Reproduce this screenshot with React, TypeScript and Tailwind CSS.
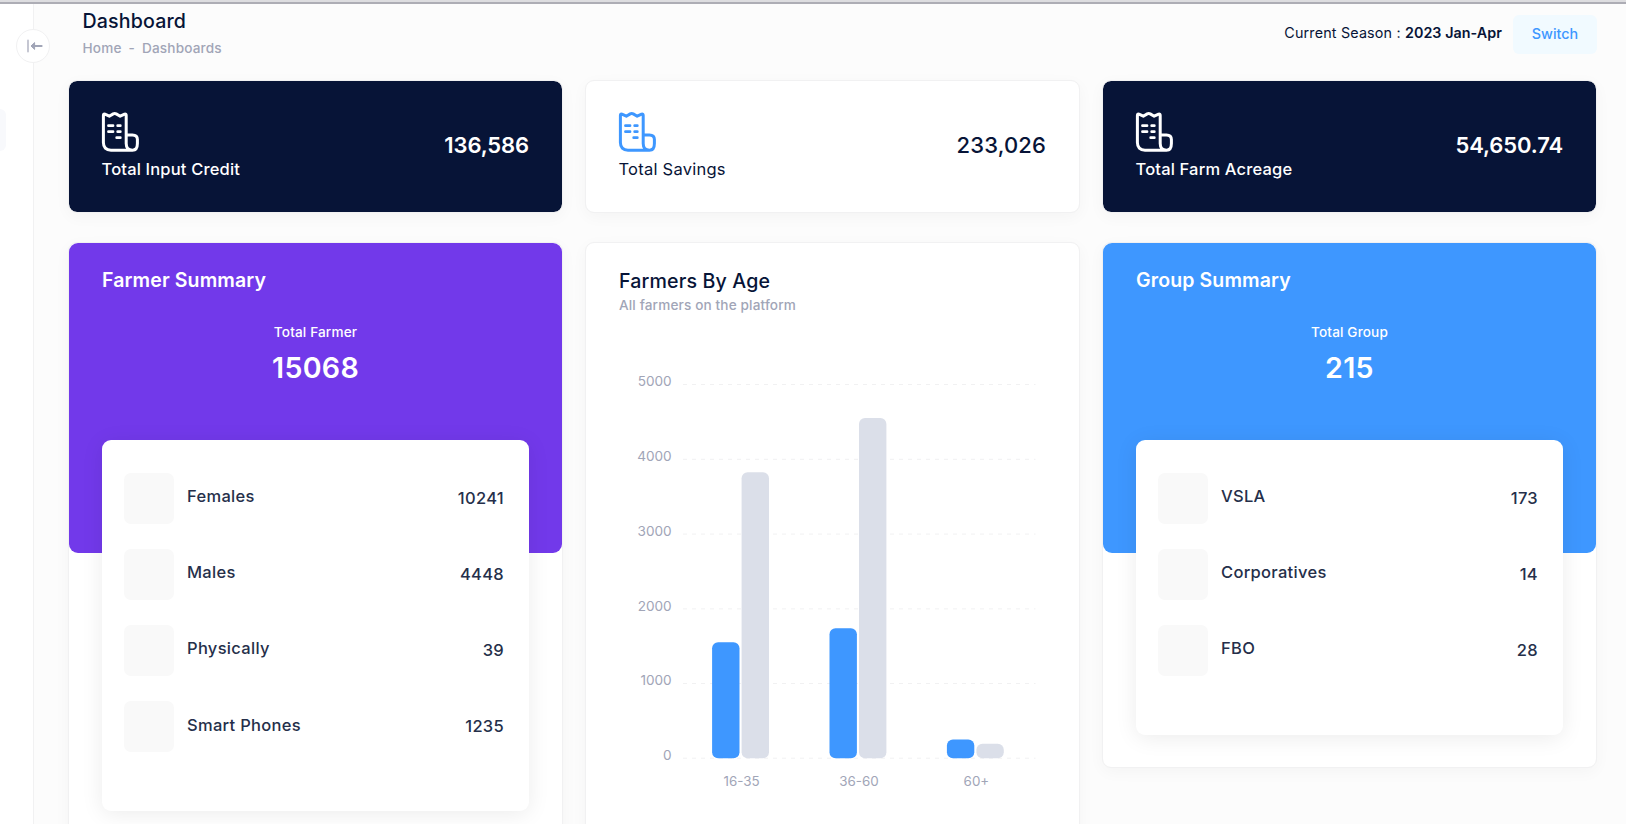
import React from "react";

const CARD =
  "rounded-[9px] border border-[#f1f1f2] bg-clip-padding shadow-[0_4px_16px_rgba(0,0,0,0.035)]";

function BillIcon({ className }: { className: string }) {
  return (
    <svg
      viewBox="0 0 40 42"
      className={className}
      fill="none"
      stroke="currentColor"
      strokeWidth="3"
      strokeLinecap="round"
      strokeLinejoin="round"
    >
      <path d="M31.5 39.2H10Q2.4 39.2 2.4 31.6V4.4Q2.4 2.7 3.9 3.2L8.3 5.2L12.2 2.9Q13.7 2.1 15.2 2.9L19.2 5.2L23.6 3.2Q25.2 2.7 25.2 4.4V32.5Q25.2 39.2 31.5 39.2Q36.4 39.2 36.4 32.5V28.5Q36.4 23.9 31.4 23.9H25.2" />
      <path d="M7.5 14.7H12M16.7 14.7H19.3M7.5 20.7H12M16.7 20.7H19.3M15.7 26.7H19.3" strokeWidth="2.8" />
    </svg>
  );
}

function StatCard({ label, value, light = false }: { label: string; value: string; light?: boolean }) {
  return (
    <div
      className={`${CARD} flex h-[133px] items-start justify-between pl-8 pr-[33px] ${
        light ? "bg-white text-[#071437]" : "bg-[#071437] text-white"
      }`}
    >
      <div className="pt-[30px]">
        <BillIcon className={`h-[42px] w-10 ${light ? "text-[#3e97ff]" : "text-white"}`} />
        <div
          className={`mt-1 pl-[0.5px] text-[16.5px] leading-6 ${
            light ? "font-normal tracking-[0.24px]" : "font-medium tracking-[0.17px]"
          }`}
        >
          {label}
        </div>
      </div>
      <div
        className={`pt-[50px] text-[22px] leading-7 ${
          light ? "font-medium tracking-[0.15px]" : "font-semibold tracking-[-0.12px]"
        }`}
      >
        {value}
      </div>
    </div>
  );
}

type Row = [string, string];

function SummaryCard(props: {
  title: string;
  caption: string;
  total: string;
  rows: Row[];
  headClass: string;
  bodyClass: string;
}) {
  return (
    <div className={`${CARD} bg-white pb-8`}>
      <div className={`h-[310px] rounded-[9px] px-[33px] pt-[22px] text-white ${props.headClass}`}>
        <h3 className="text-[19.5px] font-semibold leading-[30px] tracking-[0.12px]">{props.title}</h3>
        <div className="mt-[27px] text-center text-[13.6px] font-medium leading-5 tracking-[0.14px]">
          {props.caption}
        </div>
        <div className="mt-2 text-center text-[28.6px] font-semibold leading-9 tracking-[0.3px]">
          {props.total}
        </div>
      </div>
      <div
        className={`relative mx-[33px] -mt-[113px] rounded-[9px] bg-white pl-[22px] pr-[25px] pt-[32.9px] shadow-[0_3px_22px_rgba(0,0,0,0.08)] ${props.bodyClass}`}
      >
        <div className="flex flex-col gap-[25.5px]">
          {props.rows.map(([name, count]) => (
            <div
              key={name}
              className="flex h-[50.7px] items-center text-[16.5px] font-medium leading-6 text-[#252f4a]"
            >
              <div className="h-[50.7px] w-[50px] rounded-[7px] bg-[#f9f9f9]" />
              <div className="ml-[13px] grow pb-[4.4px] tracking-[0.3px]">{name}</div>
              <div className="pb-px tracking-[0.3px]">{count}</div>
            </div>
          ))}
        </div>
      </div>
    </div>
  );
}

const GRID = [
  { label: "5000", y: 34.5 },
  { label: "4000", y: 109.3 },
  { label: "3000", y: 184.1 },
  { label: "2000", y: 258.9 },
  { label: "1000", y: 333.5 },
  { label: "0", y: 408.2 },
];

const GROUPS = [
  { label: "16-35", x: 141.3, male: 292.3, female: 122.2 },
  { label: "36-60", x: 258.7, male: 278.3, female: 68.1 },
  { label: "60+", x: 376.1, male: 389.5, female: 393.8 },
];

function AgeChart() {
  return (
    <svg viewBox="0 0 460 460" className="h-[460px] w-[460px]">
      {GRID.map((g) => (
        <g key={g.label}>
          <line x1="83" x2="435.5" y1={g.y} y2={g.y} stroke="#f1f1f2" strokeDasharray="4 5" />
          <text x="71.7" y={g.y + 1.8} textAnchor="end" fontSize="13.6" fill="#a1a5b7">
            {g.label}
          </text>
        </g>
      ))}
      {GROUPS.map((g) => (
        <g key={g.label}>
          <rect x={g.x - 29.2} y={g.male} width="27.4" height={408.2 - g.male} rx="6" fill="#3e97ff" />
          <rect x={g.x + 0.3} y={g.female} width="27.4" height={408.2 - g.female} rx="6" fill="#dbdfe9" />
          <text x={g.x + 0.3} y="436.3" textAnchor="middle" fontSize="13.4" fill="#a1a5b7">
            {g.label}
          </text>
        </g>
      ))}
    </svg>
  );
}

export default function App() {
  return (
    <div className="flex h-[824px] w-[1626px] flex-col overflow-hidden bg-[#fcfcfc] font-['Inter',sans-serif] text-[#071437]">
      <div className="h-1 shrink-0 border-b-2 border-[#adadb5] bg-[#dddde0]" />
      <div className="flex min-h-0 grow">
        <aside className="relative w-[34px] shrink-0 border-r border-[#f1f1f2] bg-white">
          <div className="mt-[105px] h-[42px] w-1.5 rounded-r-[6px] bg-[#f8f9fc]" />
          <button className="absolute left-4 top-[25px] flex h-[34px] w-[34px] items-center justify-center rounded-full border border-[#f1f1f2] bg-white">
            <svg viewBox="0 0 18 14" className="ml-[3px] h-[14px] w-[18px] text-[#a1a5b7]" fill="none" stroke="currentColor">
              <path d="M2 1.5V12.5" strokeWidth="1.9" strokeLinecap="round" opacity=".65" />
              <path d="M8 7H15.6" strokeWidth="2" strokeLinecap="round" />
              <path d="M5 7L8.6 3.6V10.4Z" fill="currentColor" strokeWidth="1" strokeLinejoin="round" />
            </svg>
          </button>
        </aside>

        <div className="w-[1563px] shrink-0 pl-[34px]">
          <header className="flex h-[76px] items-start justify-between">
            <div className="pl-[14.5px] pt-[3px]">
              <h1 className="text-[19.6px] font-medium leading-7 tracking-[0.15px]">Dashboard</h1>
              <div className="flex gap-[7px] pt-[3px] text-[13.6px] font-medium leading-5 tracking-[0.16px] text-[#a1a5b7]">
                <span>Home</span>
                <span>-</span>
                <span>Dashboards</span>
              </div>
            </div>
            <div className="flex items-start pt-[11px]">
              <div className="pr-[11px] pt-1.5 text-[14.3px] leading-6 tracking-[0.18px]">
                Current Season : <span className="font-semibold tracking-[0.06px]">2023 Jan-Apr</span>
              </div>
              <button className="flex h-[39px] w-[84px] items-center justify-center rounded-[6px] bg-[#f1faff] pb-[2px] text-[14.3px] font-medium text-[#3e97ff]">
                Switch
              </button>
            </div>
          </header>

          <main className="grid w-[1529px] grid-cols-[495px_495px_495px] items-start gap-x-[22px] gap-y-[29px]">
            <StatCard label="Total Input Credit" value="136,586" />
            <StatCard label="Total Savings" value="233,026" light />
            <StatCard label="Total Farm Acreage" value="54,650.74" />

            <SummaryCard
              title="Farmer Summary"
              caption="Total Farmer"
              total="15068"
              headClass="bg-[#7239ea]"
              bodyClass="h-[371px]"
              rows={[
                ["Females", "10241"],
                ["Males", "4448"],
                ["Physically", "39"],
                ["Smart Phones", "1235"],
              ]}
            />

            <div className={`${CARD} h-[640px] bg-white pt-[23px]`}>
              <div className="pl-[33px]">
                <h3 className="text-[19.6px] font-medium leading-[30px] tracking-[0.15px]">
                  Farmers By Age
                </h3>
                <div className="-mt-px mb-px text-[13.6px] font-medium leading-5 tracking-[0.14px] text-[#a1a5b7]">
                  All farmers on the platform
                </div>
              </div>
              <div className="pl-[14px] pt-[34px]">
                <AgeChart />
              </div>
            </div>

            <SummaryCard
              title="Group Summary"
              caption="Total Group"
              total="215"
              headClass="bg-[#3e97ff]"
              bodyClass="h-[295px]"
              rows={[
                ["VSLA", "173"],
                ["Corporatives", "14"],
                ["FBO", "28"],
              ]}
            />
          </main>
        </div>
      </div>
    </div>
  );
}
